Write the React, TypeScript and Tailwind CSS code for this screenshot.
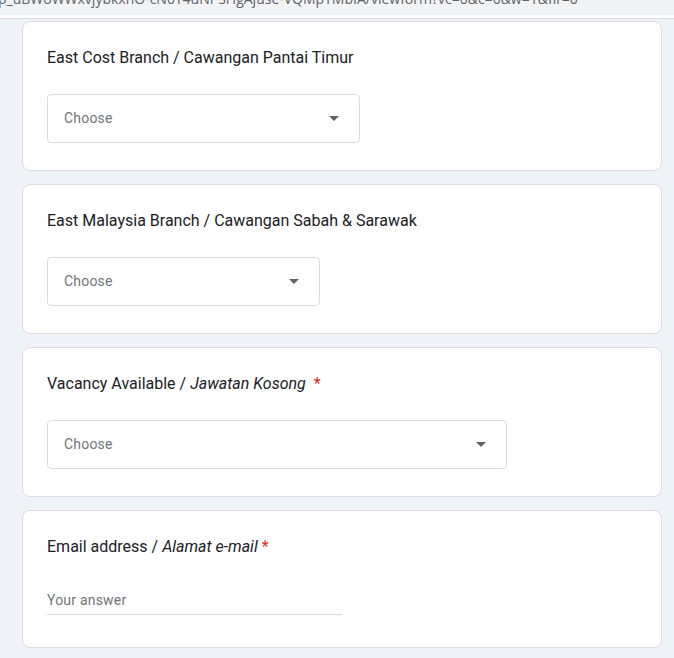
import { ReactNode } from "react";

const font = { fontFamily: "Roboto, Arial, sans-serif" };

function Card({ children, pb = "pb-[27px]" }: { children: ReactNode; pb?: string }) {
  return (
    <div className={`rounded-lg border border-[#dadce0] bg-white px-6 pt-6 ${pb}`}>
      {children}
    </div>
  );
}

function Title({ children }: { children: ReactNode }) {
  return <div className="text-[16px] leading-6 text-[#202124]">{children}</div>;
}

function Select({ width }: { width: number }) {
  return (
    <div
      className="mt-6 flex h-[49px] items-center justify-between rounded border border-[#dadce0] pl-4 pr-5"
      style={{ width }}
    >
      <span className="text-[14px] tracking-[0.2px] text-[#70757a]">Choose</span>
      <svg width="10" height="5" viewBox="0 0 10 5">
        <path d="M0 0 L10 0 L5 5 Z" fill="#5f6368" />
      </svg>
    </div>
  );
}

export default function App() {
  return (
    <div className="min-h-screen bg-[#f0f4f9]" style={font}>
      {/* browser url strip, mostly scrolled away */}
      <div className="h-[15px] overflow-hidden bg-[#f1f3f4]">
        <div
          className="-ml-[2px] -mt-[11px] whitespace-nowrap text-[14px] leading-5 text-[#5f6368]"
          style={{ fontFamily: "'Open Sans', sans-serif" }}
        >
          p_uBWoWWxvjybkxhO-cN0T4uNPSHgAjuse-VQMpTMbIA/viewform?vc=0&amp;c=0&amp;w=1&amp;flr=0
        </div>
      </div>
      <div className="h-[4px] border-b border-[#dadce0] bg-white" />

      <div className="flex flex-col gap-[13px] pl-[22px] pr-3 pt-[2px]">
        <Card>
          <Title>East Cost Branch / Cawangan Pantai Timur</Title>
          <Select width={313} />
        </Card>
        <Card>
          <Title>East Malaysia Branch / Cawangan Sabah &amp; Sarawak</Title>
          <Select width={273} />
        </Card>
        <Card>
          <Title>
            Vacancy Available / <i>Jawatan Kosong</i>
            <span className="ml-2 text-[#d93025]">*</span>
          </Title>
          <Select width={460} />
        </Card>
        <Card pb="pb-[32px]">
          <Title>
            Email address / <i>Alamat e-mail</i>
            <span className="text-[#d93025]"> *</span>
          </Title>
          <div className="mt-[31px] w-[295px] border-b border-[#dadce0] pb-[3px] text-[14px] tracking-[0.2px] text-[#70757a]">
            Your answer
          </div>
        </Card>
      </div>
    </div>
  );
}
